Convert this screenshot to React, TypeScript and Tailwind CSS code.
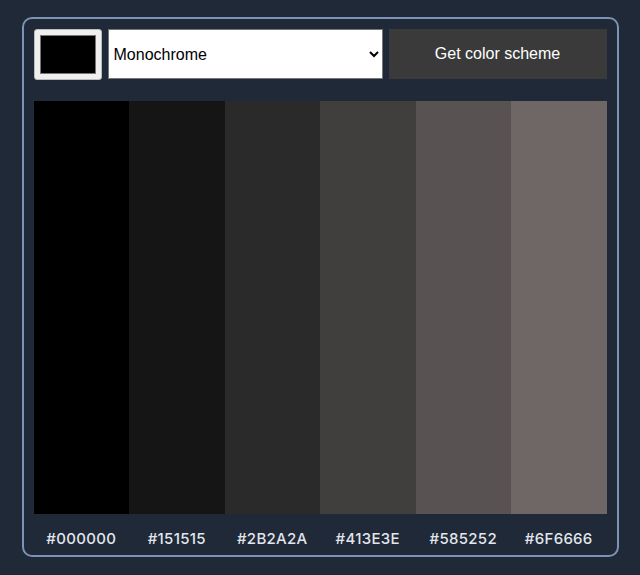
import React from "react";

const colors = ["#000000", "#151515", "#2B2A2A", "#413E3E", "#585252", "#6F6666"];

export default function App() {
  return (
    <div className="min-h-[575px] bg-[#1f2937] pt-[17px]">
      <div className="mx-auto w-[597px] h-[540px] rounded-[10px] border-2 border-[#7d92b5] px-[10px] pt-[10px]">
        {/* Controls */}
        <div className="flex h-[50px] gap-[6px]">
          <div className="w-[68px] h-[51px] rounded-[3px] border border-[#bdbdbd] bg-[#efefef] p-[5px]">
            <div className="h-full w-full border border-[#777] bg-black" />
          </div>
          <select
            defaultValue="monochrome"
            className="w-[275px] h-[50px] border border-[#767676] bg-white pl-[1px] pr-1 text-[16px] text-black"
            style={{ fontFamily: "Arial, 'Liberation Sans', sans-serif" }}
          >
            <option value="monochrome">Monochrome</option>
            <option value="monochrome-dark">Monochrome-dark</option>
            <option value="analogic">Analogic</option>
          </select>
          <button
            className="flex-1 h-[50px] bg-[#3a3a3a] text-[16px] text-white"
            style={{ fontFamily: "Arial, 'Liberation Sans', sans-serif" }}
          >
            Get color scheme
          </button>
        </div>

        {/* Swatches */}
        <div className="mt-[22px] grid grid-cols-6 h-[413px]">
          {colors.map((c) => (
            <div key={c} style={{ backgroundColor: c }} />
          ))}
        </div>

        {/* Hex labels */}
        <div className="grid grid-cols-6 pt-[15px]">
          {colors.map((c) => (
            <p
              key={c}
              className="text-center text-[15px] leading-5 font-medium tracking-[0.3px] text-[#e2e6ec]"
              style={{ fontFamily: "Inter, sans-serif" }}
            >
              {c}
            </p>
          ))}
        </div>
      </div>
    </div>
  );
}
